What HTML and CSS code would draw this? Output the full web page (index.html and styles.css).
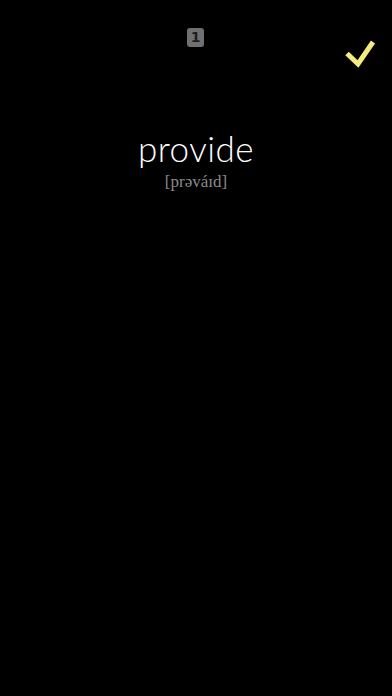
FILE: index.html
```html
<!DOCTYPE html>
<html>
<head>
<meta charset="utf-8">
<link rel="stylesheet" href="styles.css">
</head>
<body>
<div class="screen">
  <header class="top">
    <span class="badge">1</span>
    <svg class="check" width="32" height="30" viewBox="0 0 32 30">
      <path d="M3 14.5 L14 25 L29 3" fill="none" stroke="#f4ec7c" stroke-width="5" stroke-linecap="butt" stroke-linejoin="miter"/>
    </svg>
  </header>
  <main class="word">
    <div class="term">provide</div>
    <div class="phon">[prəváɪd]</div>
  </main>
</div>
</body>
</html>
```
FILE: styles.css
```css
html, body {
  margin: 0;
  padding: 0;
  background: #000;
}
.screen {
  width: 392px;
  height: 696px;
  background: #000;
  position: relative;
  overflow: hidden;
}
.top {
  height: 80px;
  position: relative;
}
.badge {
  position: absolute;
  left: 187px;
  top: 28px;
  width: 17px;
  height: 19px;
  border-radius: 3px;
  background: #707070;
  color: #1e1e1e;
  font-family: "DejaVu Sans", sans-serif;
  font-weight: bold;
  font-size: 14px;
  line-height: 19px;
  text-align: center;
}
.check {
  position: absolute;
  left: 344px;
  top: 39px;
}
.word {
  display: flex;
  flex-direction: column;
  align-items: center;
  padding-top: 48px;
}
.term {
  font-family: "Lato", sans-serif;
  font-weight: 300;
  font-size: 35px;
  color: #fff;
  line-height: 40px;
  letter-spacing: 0.5px;
}
.phon {
  font-family: "Liberation Serif", serif;
  font-size: 17px;
  color: #8a8a8a;
  line-height: 20px;
  margin-top: 4px;
}
```
